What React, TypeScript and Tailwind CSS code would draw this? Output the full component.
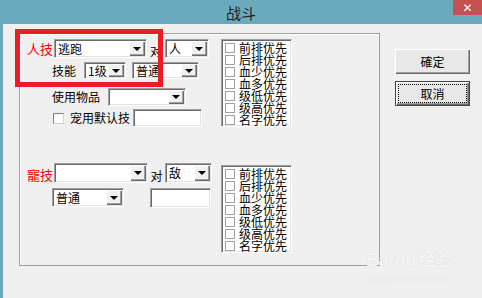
import React from "react";

// Windows classic "战斗" dialog with a red highlight over the 人技 row.

const font = { fontFamily: '"SimSun", "Noto Sans CJK SC", sans-serif' };

const priorities = ["前排优先", "后排优先", "血少优先", "血多优先", "级低优先", "级高优先", "名字优先"];

const sunken =
  "border border-t-[#a0a0a0] border-l-[#a0a0a0] border-b-white border-r-white shadow-[inset_1px_1px_0_#696969,inset_-1px_-1px_0_#e3e3e3] p-[1px] bg-white";

const Combo = ({ w, h, text }: { w: string; h: string; text?: string }) => (
  <div className={`flex ${w} ${h} ${sunken}`}>
    <span className="flex-1 pl-[2px] text-[12px] leading-none text-black flex items-center">{text}</span>
    <div className="w-[16px] h-full bg-[#f0f0f0] flex items-center justify-center shadow-[inset_1px_1px_0_#ffffff,inset_-1px_-1px_0_#696969,inset_-2px_-2px_0_#a0a0a0]">
      <div className="w-0 h-0 border-l-[4px] border-r-[4px] border-t-[4px] border-l-transparent border-r-transparent border-t-black" />
    </div>
  </div>
);

const TextBox = ({ w, h }: { w: string; h: string }) => <div className={`${w} ${h} ${sunken}`} />;

const ListBox = ({ mt }: { mt: string }) => (
  <div className={`w-[71px] h-[88px] ${mt} ${sunken} flex flex-col pt-[2px] pl-[3px]`}>
    {priorities.map((p) => (
      <div key={p} className="flex items-center h-[12px] gap-[4px]">
        <div className="w-[10px] h-[10px] border border-[#a0a0a0] bg-white" />
        <span className="text-[12px] leading-[12px] text-black">{p}</span>
      </div>
    ))}
  </div>
);

export default function App() {
  return (
    <div className="relative w-[482px] h-[298px] overflow-hidden bg-[#6aaabc] flex flex-col" style={font}>
      {/* title bar */}
      <div className="relative h-[24px] flex items-center justify-center">
        <span className="text-[15px] leading-none text-[#222]">战斗</span>
        <div className="absolute right-0 top-0 w-[29px] h-[15px] bg-[#c75050] flex items-center justify-center text-white text-[12px] font-bold leading-none" style={{ fontFamily: '"DejaVu Sans", sans-serif' }}>
          ✕
        </div>
      </div>

      {/* body */}
      <div className="flex-1 ml-[3px] bg-[#f0f0f0] flex items-start">
        {/* group box */}
        <div className="ml-[16px] mt-[9px] w-[361px] h-[233px] border border-[#a0a0a0] shadow-[inset_1px_1px_0_#ffffff] pt-[5px] pl-[7px] flex flex-col">
          {/* section 1 */}
          <div className="flex">
            <div className="w-[194px] flex flex-col">
              <div className="flex items-center h-[19px]">
                <span className="w-[27px] text-[13px] leading-none text-[#ff0000]">人技</span>
                <Combo w="w-[93px]" h="h-[19px]" text="逃跑" />
                <span className="w-[18px] text-center text-[12px] leading-none text-black mt-[4px]">对</span>
                <Combo w="w-[44px]" h="h-[19px]" text="人" />
              </div>
              <div className="flex items-center h-[17px] mt-[4px] pl-[25px]">
                <span className="w-[32px] text-[12px] leading-none text-black">技能</span>
                <Combo w="w-[42px]" h="h-[17px]" text="1级" />
                <div className="ml-[6px]">
                  <Combo w="w-[67px]" h="h-[17px]" text="普通" />
                </div>
              </div>
              <div className="flex items-center h-[18px] mt-[9px] pl-[25px]">
                <span className="w-[56px] text-[12px] leading-none text-black">使用物品</span>
                <Combo w="w-[78px]" h="h-[18px]" />
              </div>
              <div className="flex items-center h-[18px] mt-[3px] pl-[26px]">
                <div className="w-[11px] h-[11px] border border-t-[#808080] border-l-[#808080] border-b-[#d0d0d0] border-r-[#d0d0d0] bg-white" />
                <span className="ml-[6px] w-[63px] text-[12px] leading-none text-black">宠用默认技</span>
                <TextBox w="w-[69px]" h="h-[18px]" />
              </div>
            </div>
            <ListBox mt="mt-0" />
          </div>

          {/* section 2 */}
          <div className="flex mt-[36px]">
            <div className="w-[194px] flex flex-col">
              <div className="flex items-center h-[20px]">
                <span className="w-[27px] text-[13px] leading-none text-[#ff0000] mt-[2px]">寵技</span>
                <Combo w="w-[94px]" h="h-[20px]" />
                <span className="w-[17px] text-center text-[12px] leading-none text-black mt-[6px]">对</span>
                <Combo w="w-[47px]" h="h-[20px]" text="敌" />
              </div>
              <div className="flex items-center h-[19px] mt-[5px] pl-[25px]">
                <Combo w="w-[72px]" h="h-[19px]" text="普通" />
                <div className="ml-[26px]">
                  <TextBox w="w-[61px]" h="h-[20px]" />
                </div>
              </div>
            </div>
            <ListBox mt="mt-[2px]" />
          </div>
        </div>

        {/* buttons */}
        <div className="ml-[15px] mt-[25px] flex flex-col gap-[7px]">
          <div className="w-[75px] h-[25px] bg-[#e8e8e8] flex items-center justify-center text-[12px] leading-none text-black shadow-[inset_1px_1px_0_#ffffff,inset_-1px_-1px_0_#696969,inset_-2px_-2px_0_#a0a0a0]">
            確定
          </div>
          <div className="w-[75px] h-[25px] border border-[#444] bg-[#e8e8e8] p-[2px] shadow-[inset_1px_1px_0_#ffffff,inset_-1px_-1px_0_#696969,inset_-2px_-2px_0_#a0a0a0]">
            <div className="w-full h-full border border-dotted border-black flex items-center justify-center text-[12px] leading-none text-black">
              取消
            </div>
          </div>
        </div>
      </div>

      {/* red highlight */}
      <div className="absolute left-[15px] top-[29px] w-[148px] h-[58px] border-[5px] border-[#ed1c24]" />

      {/* watermark */}
      <div className="absolute left-[366px] top-[249px] flex flex-col items-center text-white/80 leading-none" style={{ fontFamily: '"Liberation Sans", sans-serif' }}>
        <span className="text-[18px] font-bold tracking-tight" style={{ textShadow: "0 0 1px #c8c8c8" }}>
          Bai<span className="mx-[2px]">du</span>
          <span style={{ fontFamily: '"Noto Sans CJK SC", sans-serif' }}>经验</span>
        </span>
        <span className="text-[10px] mt-[5px]" style={{ textShadow: "0 0 1px #c8c8c8" }}>jingyan.baidu.com</span>
      </div>
    </div>
  );
}
